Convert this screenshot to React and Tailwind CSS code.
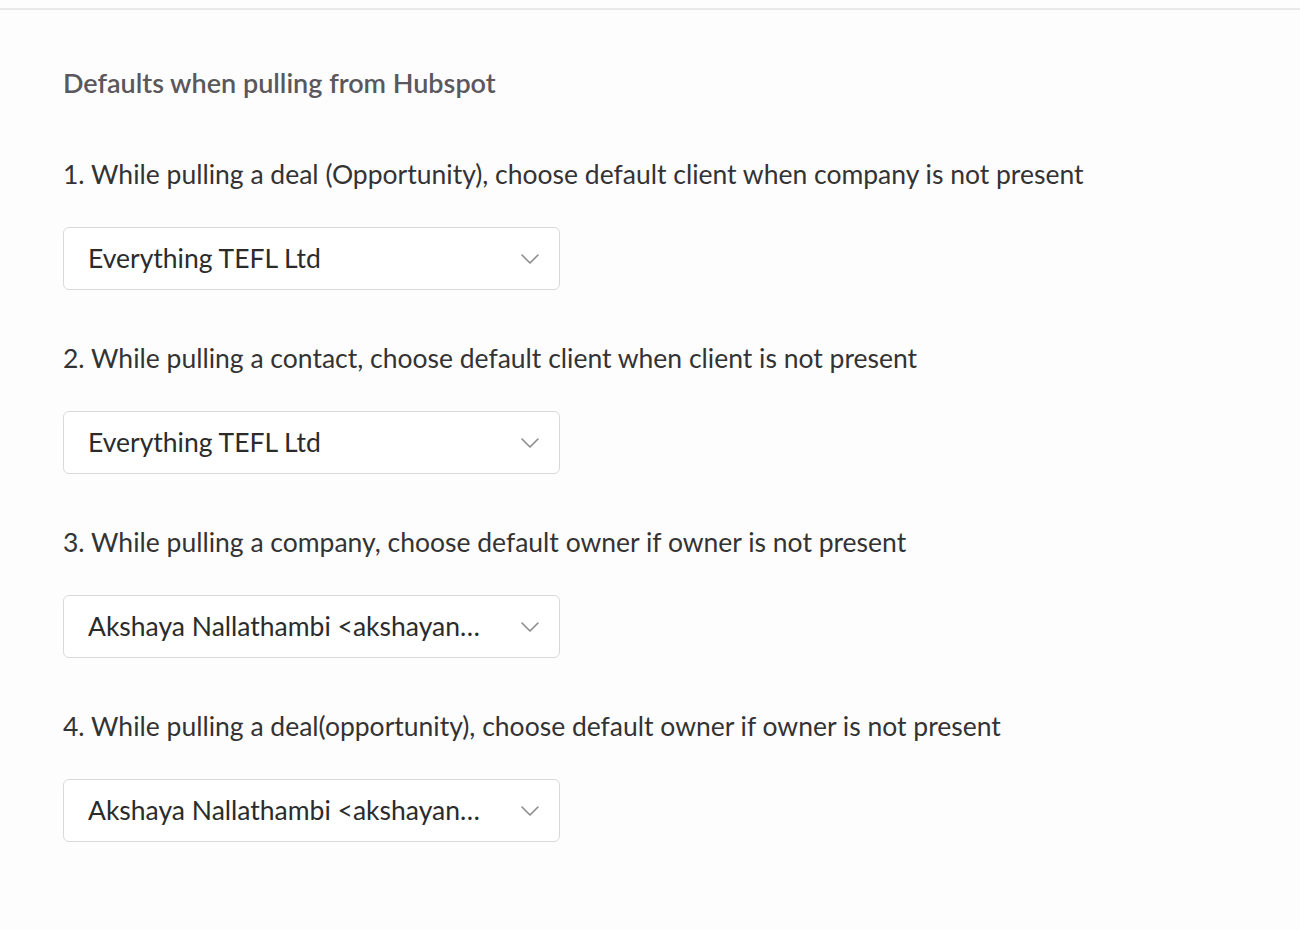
import React from "react";

function Chevron() {
  return (
    <svg width="20" height="12" viewBox="0 0 20 12" fill="none" className="shrink-0">
      <path d="M2 2 L10 10 L18 2" stroke="#8a8a8a" strokeWidth="1.6" strokeLinecap="round" strokeLinejoin="round" />
    </svg>
  );
}

function Select({ value }) {
  return (
    <div className="mt-[33px] flex h-[63px] w-[497px] items-center rounded-[6px] border border-[#d9d9d9] bg-white pl-[24px] pr-[19px]">
      <span className="min-w-0 flex-1 truncate pr-[26px] text-[26.5px] text-[#2b2b2b]">{value}</span>
      <Chevron />
    </div>
  );
}

function Item({ label, value }) {
  return (
    <div className="flex flex-col">
      <div className="h-[40px] leading-[40px] text-[26.5px] text-[#333333]">{label}</div>
      <Select value={value} />
    </div>
  );
}

export default function App() {
  const items = [
    ["1. While pulling a deal (Opportunity), choose default client when company is not present", "Everything TEFL Ltd"],
    ["2. While pulling a contact, choose default client when client is not present", "Everything TEFL Ltd"],
    ["3. While pulling a company, choose default owner if owner is not present", "Akshaya Nallathambi <akshayan@everythingtefl.com>"],
    ["4. While pulling a deal(opportunity), choose default owner if owner is not present", "Akshaya Nallathambi <akshayan@everythingtefl.com>"],
  ];
  return (
    <div className="min-h-[930px] w-[1300px] bg-[#fefdfe]" style={{ fontFamily: '"Source Sans Pro", Lato, "Noto Sans", sans-serif' }}>
      <div className="pt-[8px]">
        <div className="h-[2px] bg-[#e9e9e9]" />
      </div>
      <div className="pl-[63px]">
        <div className="mt-[56px] h-[34px] leading-[34px] text-[27px] font-semibold text-[#5a585c]">Defaults when pulling from Hubspot</div>
        <div className="mt-[54px] flex flex-col gap-[48px]">
          {items.map(([l, v], i) => (
            <Item key={i} label={l} value={v} />
          ))}
        </div>
      </div>
    </div>
  );
}
